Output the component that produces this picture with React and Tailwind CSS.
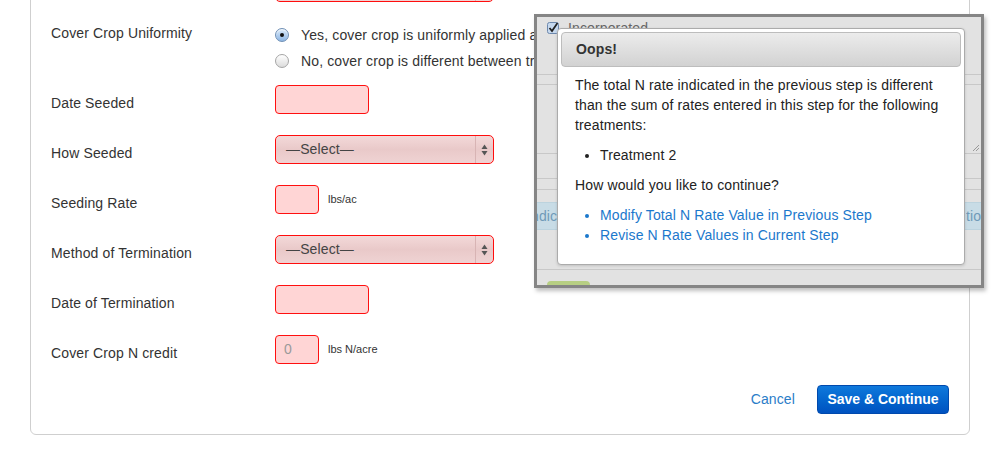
import React from 'react';

function Radio({ checked }) {
  return checked ? (
    <span className="flex items-center justify-center w-[14px] h-[14px] rounded-full border border-[#6f8fb5] bg-gradient-to-b from-[#dcebfa] to-[#8db6e4] shadow-[inset_0_1px_1px_rgba(255,255,255,0.8)]">
      <span className="w-[4px] h-[4px] rounded-full bg-[#111]" />
    </span>
  ) : (
    <span className="w-[14px] h-[14px] rounded-full border border-[#a5a5a5] bg-gradient-to-b from-[#ffffff] to-[#dcdcdc]" />
  );
}

function Select({ label = '—Select—' }) {
  return (
    <div className="flex items-center w-[219px] h-[29px] rounded-[5px] border border-[#ff0d0d] bg-gradient-to-b from-[#f3d9d9] via-[#e9c9c9] to-[#efd3d3] text-[#444]">
      <span className="flex-1 pl-[10px] text-[14px]">{label}</span>
      <span className="flex items-center justify-center w-[18px] h-full border-l border-[#d8b4b4]">
        <svg width="7" height="12" viewBox="0 0 7 12">
          <path d="M3.5 0.5 L6.5 5 L0.5 5 Z" fill="#555" />
          <path d="M0.5 7 L6.5 7 L3.5 11.5 Z" fill="#555" />
        </svg>
      </span>
    </div>
  );
}

function Input({ w, placeholder }) {
  return (
    <div className={`${w} h-[29px] rounded-[4px] border border-[#ff1010] bg-[#ffd5d5] flex items-center pl-[8px] text-[14px] text-[#9a9a9a]`}>
      {placeholder}
    </div>
  );
}

function Row({ label, children, className = 'mt-[21px]' }) {
  return (
    <div className={`grid grid-cols-[224px_1fr] ${className}`}>
      <div className="pt-[8px] leading-[20px]">{label}</div>
      <div className="flex items-center h-[29px]">{children}</div>
    </div>
  );
}

export default function App() {
  return (
    <div className="relative h-[450px] overflow-hidden bg-white text-[14px] tracking-[0.13px] text-[#333] font-['Liberation_Sans',Arial,sans-serif]">
      <div className="ml-[30px] w-[940px] -mt-[48px] border border-[#cfcfcf] rounded-[6px] px-[20px] pt-[20px] pb-[20px]">
        <div className="grid grid-cols-[224px_1fr]">
          <div />
          <Select />
        </div>

        <div className="grid grid-cols-[224px_1fr] mt-[20px]">
          <div className="leading-[22px]">Cover Crop Uniformity</div>
          <div>
            <div className="flex items-center h-[26px] gap-[12px]">
              <Radio checked />
              <span>Yes, cover crop is uniformly applied across all treatments</span>
            </div>
            <div className="flex items-center h-[26px] gap-[12px]">
              <Radio />
              <span>No, cover crop is different between treatments</span>
            </div>
          </div>
        </div>

        <Row label="Date Seeded" className="mt-[11px]">
          <Input w="w-[94px]" />
        </Row>
        <Row label="How Seeded">
          <Select />
        </Row>
        <Row label="Seeding Rate">
          <Input w="w-[44px]" />
          <span className="ml-[9px] text-[11px] tracking-normal">lbs/ac</span>
        </Row>
        <Row label="Method of Termination">
          <Select />
        </Row>
        <Row label="Date of Termination">
          <Input w="w-[94px]" />
        </Row>
        <Row label="Cover Crop N credit">
          <Input w="w-[44px]" placeholder="0" />
          <span className="ml-[9px] text-[11px] tracking-normal">lbs N/acre</span>
        </Row>

        <div className="flex justify-end items-center gap-[22px] mt-[21px]">
          <a className="text-[#2a7dc8] text-[14px]">Cancel</a>
          <button className="h-[29px] w-[132px] rounded-[4px] border border-[#0049ad] bg-gradient-to-b from-[#0f79dc] to-[#0052c0] text-white text-[14px] font-semibold tracking-normal">
            Save &amp; Continue
          </button>
        </div>
      </div>

      {/* dimmed underlying window */}
      <div className="absolute left-[534px] top-[14px] w-[450px] h-[274px] border-[3px] border-[#858585] bg-[#e2e2e2] shadow-[2px_3px_4px_rgba(0,0,0,0.25)] overflow-hidden">
        <div className="h-[58px] border-b border-[#c8c8c8] pt-[5px] pl-[10px] flex items-start gap-[9px]">
          <svg width="12" height="12" viewBox="0 0 12 12">
            <rect x="0.5" y="0.5" width="11" height="11" rx="2" fill="#c7d9ee" stroke="#6d88ad" />
            <path d="M2.5 6 L5 9 L10.5 1" fill="none" stroke="#222" strokeWidth="1.8" />
          </svg>
          <span className="text-[#666] leading-[12px]">Incorporated</span>
        </div>
        <div className="h-[10px] border-b border-[#c8c8c8]" />
        <div className="relative h-[69px] border-b border-[#c8c8c8]">
          <svg className="absolute right-[2px] bottom-[2px]" width="6" height="6" viewBox="0 0 6 6">
            <path d="M0 6 L6 0 M3 6 L6 3" stroke="#999" strokeWidth="1" />
          </svg>
        </div>
        <div className="h-[25px] border-b border-[#c8c8c8]" />
        <div className="h-[11px] border-b border-[#c8c8c8]" />
        <div className="mt-[12px] h-[28px] bg-[#c8dce6] border-y border-[#bcd3de] flex items-center justify-between text-[#6f9ab8] overflow-hidden">
          <span className="-ml-[10px]">Indica</span>
          <span className="w-[15px] overflow-hidden whitespace-nowrap">tion</span>
        </div>
        <div className="h-[40px] border-b border-[#c8c8c8]" />
        <div className="mt-[11px] ml-[10px] w-[43px] h-[10px] rounded-t-[4px] bg-[#b7cf83]" />

        {/* Oops dialog */}
        <div className="absolute left-[20px] top-[11px] w-[408px] h-[237px] bg-white border border-[#ababab] rounded-[4px] shadow-[0_1px_3px_rgba(0,0,0,0.15)] p-[3px]">
          <div className="h-[35px] rounded-[4px] border border-[#bdbdbd] bg-gradient-to-b from-[#ececec] to-[#d2d2d2] flex items-center pl-[14px] font-bold text-[#333]">
            Oops!
          </div>
          <div className="px-[14px] pt-[8px] leading-[20px] text-[#222]">
            <p>
              The total N rate indicated in the previous step is different than the sum of rates entered in this step for the following treatments:
            </p>
            <ul className="list-disc pl-[25px] mt-[10px]">
              <li>Treatment 2</li>
            </ul>
            <p className="mt-[10px]">How would you like to continue?</p>
            <ul className="list-disc pl-[25px] mt-[10px] text-[#1b78cc]">
              <li><span className="text-[#1b78cc]">Modify Total N Rate Value in Previous Step</span></li>
              <li><span className="text-[#1b78cc]">Revise N Rate Values in Current Step</span></li>
            </ul>
          </div>
        </div>
      </div>
    </div>
  );
}
